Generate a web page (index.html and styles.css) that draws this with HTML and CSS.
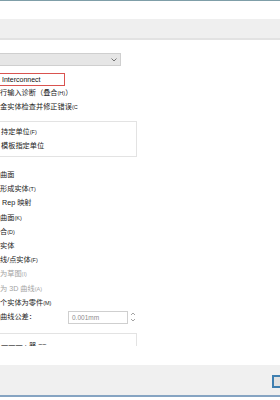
FILE: index.html
```html
<!DOCTYPE html>
<html>
<head>
<meta charset="UTF-8" />
<title>导入选项</title>
<link rel="stylesheet" href="styles.css">
</head>
<body>
  <div class="window">
    <div class="title-line"></div>
    <div class="title-gap"></div>
    <div class="tab-strip"></div>

    <div class="scroll">
      <div class="combo">
        <svg class="chevron" width="6" height="4" viewBox="0 0 6 4"><polyline points="0.5,0.5 3,3 5.5,0.5" fill="none" stroke="#666" stroke-width="0.9"/></svg>
      </div>

      <div class="name-box">Interconnect</div>

      <div class="row">行输入诊断（叠合<span class="key">(H)</span>）</div>
      <div class="row">金实体检查并修正错误<span class="key">(C</span></div>

      <div class="group">
        <div class="row">持定单位<span class="key">(F)</span></div>
        <div class="row">模板指定单位</div>
      </div>

      <div class="list">
        <div class="row">曲面</div>
        <div class="row">形成实体<span class="key">(T)</span></div>
        <div class="row">&nbsp;Rep 映射</div>
        <div class="row">曲面<span class="key">(K)</span></div>
        <div class="row">合<span class="key">(D)</span></div>
        <div class="row">实体</div>
        <div class="row">线/点实体<span class="key">(F)</span></div>
        <div class="row muted">为草图<span class="key">(I)</span></div>
        <div class="row muted">为 3D 曲线<span class="key">(A)</span></div>
        <div class="row">个实体为零件<span class="key">(M)</span></div>
        <div class="row tol-row">
          <span class="tol-label">曲线公差：</span>
          <span class="tol-input">0.001mm</span>
          <span class="spin">
            <svg width="6" height="12" viewBox="0 0 6 12"><polyline points="1,4 3,2 5,4" fill="none" stroke="#9a9a9a" stroke-width="0.9"/><polyline points="1,8 3,10 5,8" fill="none" stroke="#9a9a9a" stroke-width="0.9"/></svg>
          </span>
        </div>
      </div>

      <div class="group lower">
        <div class="row">一一一 · 器 ==</div>
      </div>
    </div>

    <div class="blank"></div>

    <div class="footer">
      <div class="btn"></div>
    </div>
    <div class="bottom-line"></div>
  </div>
</body>
</html>
```

FILE: styles.css
```css
/* 导入选项对话框 - 截取片段 */
body {
  margin: 0;
  background: #ffffff;
  font-family: "Liberation Sans", "Noto Sans CJK SC", sans-serif;
  font-size: 7.2px;
  color: #222;
  overflow: hidden;
}
.window {
  width: 280px;
  height: 400px;
  overflow: hidden;
}
.title-line {
  height: 1px;
  background: #7f9ea8;
}
.title-gap {
  height: 18px;
}
.tab-strip {
  height: 19px;
  background: #efefef;
  border-bottom: 2px solid #e2e2e2;
}
.scroll {
  height: 306px;
  padding-top: 13px;
  box-sizing: border-box;
  overflow: hidden;
}
.combo {
  position: relative;
  width: 131px;
  height: 13px;
  margin-left: -10px;
  box-sizing: border-box;
  background: #e6e6e6;
  border: 1px solid #cfcfcf;
}
.chevron {
  position: absolute;
  right: 3px;
  top: 4px;
}
.name-box {
  width: 75px;
  height: 13px;
  margin: 7px 0 0 -10px;
  padding-left: 11px;
  box-sizing: border-box;
  border: 1px solid #d9534f;
  font-size: 7px;
  line-height: 11px;
  color: #111;
}
.row {
  height: 14px;
  line-height: 14px;
  white-space: nowrap;
}
.key {
  font-size: 5.5px;
}
.muted {
  color: #a3a3a3;
}
.group {
  width: 147px;
  margin: 7px 0 0 -10px;
  padding: 3px 0 3px 10px;
  box-sizing: border-box;
  border: 1px solid #e3e3e3;
}
.list {
  margin-top: 11px;
}
.list .row {
  height: 14.2px;
  line-height: 14.2px;
}
.list .tol-row {
  display: flex;
  align-items: center;
  height: 15px;
}
.tol-label {
  width: 68px;
}
.tol-input {
  width: 60px;
  height: 13px;
  box-sizing: border-box;
  border: 1px solid #cfcfcf;
  padding-left: 3px;
  font-size: 6.5px;
  line-height: 11px;
  color: #8c8c8c;
}
.spin {
  display: flex;
  margin-left: 2px;
}
.group.lower {
  margin-top: 8px;
  height: 40px;
  padding-top: 5px;
}
.blank {
  height: 19px;
}
.footer {
  height: 30px;
  background: #f0f0f0;
  display: flex;
  justify-content: flex-end;
  padding-top: 10px;
  box-sizing: border-box;
}
.btn {
  width: 20px;
  height: 13px;
  margin-right: -12px;
  box-sizing: border-box;
  border: 2px solid #3f7fb0;
  background: #e1e1e1;
}
.bottom-line {
  height: 2px;
  background: #86a4c2;
}
```
